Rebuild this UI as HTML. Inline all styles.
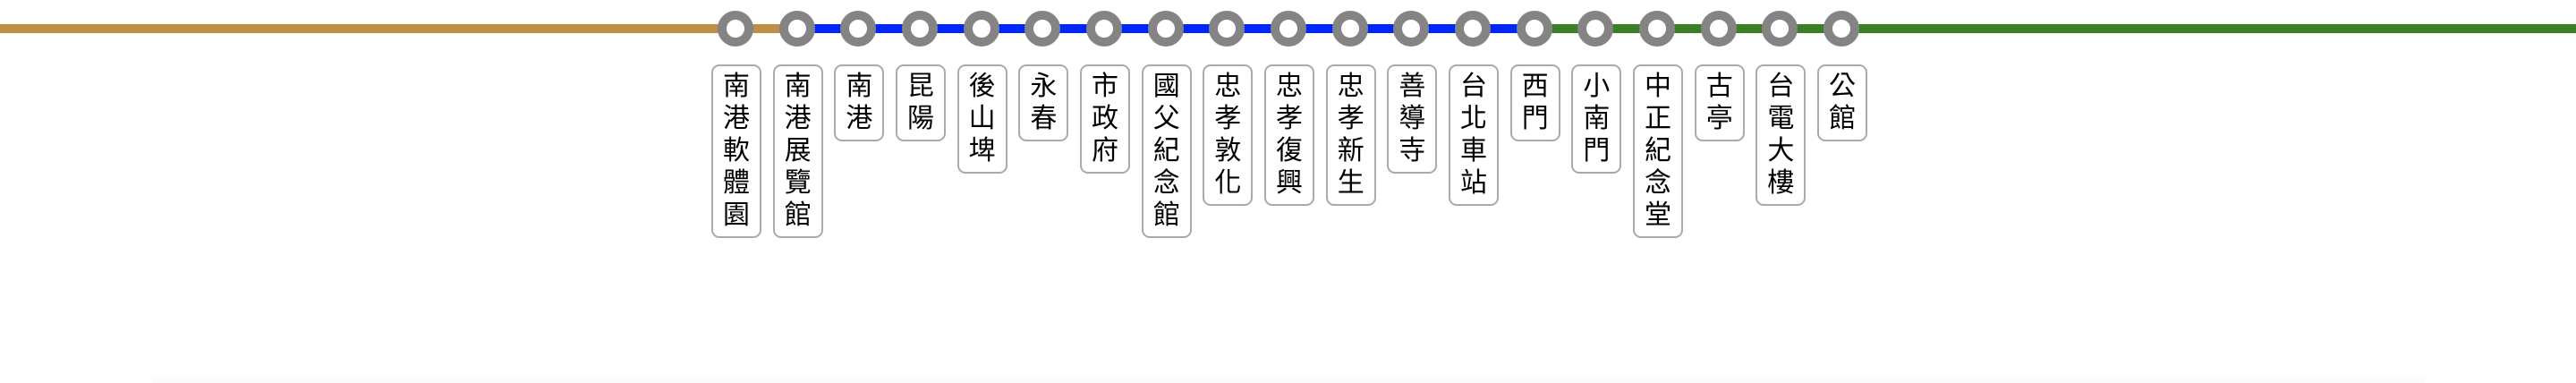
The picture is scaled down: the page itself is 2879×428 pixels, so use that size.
<!DOCTYPE html>
<html><head><meta charset="utf-8"><style>
html,body{margin:0;padding:0;background:#fff;width:2879px;height:428px;overflow:hidden;position:relative;font-family:"Liberation Sans","Noto Sans CJK TC",sans-serif;}
.ln{position:absolute;top:27px;height:10px;}
.st{position:absolute;top:12px;width:20px;height:20px;border:10px solid #848484;border-radius:50%;background:#fff;}
.lb{position:absolute;top:72px;width:52px;border:2px solid #aaa;border-radius:9px;background:#fff;box-sizing:content-box;padding:5px 0 5px;font-size:30px;line-height:36px;text-align:center;color:#000;}
.sh{position:absolute;left:170px;width:2540px;top:418px;height:10px;background:linear-gradient(#fff,#fafafa);border-radius:10px 10px 0 0;}
</style></head><body>
<div class="ln" style="left:0;width:890px;background:#c08e45"></div>
<div class="ln" style="left:890px;width:826px;background:#0026ff"></div>
<div class="ln" style="left:1715px;width:1164px;background:#3a7f25"></div>
<div class="sh"></div>
<div id="c"></div>
<script>
var n=["南港軟體園","南港展覽館","南港","昆陽","後山埤","永春","市政府","國父紀念館","忠孝敦化","忠孝復興","忠孝新生","善導寺","台北車站","西門","小南門","中正紀念堂","古亭","台電大樓","公館"];
var h="";
for(var i=0;i<n.length;i++){var x=822+i*68.67;
h+='<div class="st" style="left:'+(x-20)+'px"></div>';
h+='<div class="lb" style="left:'+(x-27)+'px">'+n[i].split("").join("<br>")+'</div>';}
document.getElementById("c").innerHTML=h;
</script>
</body></html>
